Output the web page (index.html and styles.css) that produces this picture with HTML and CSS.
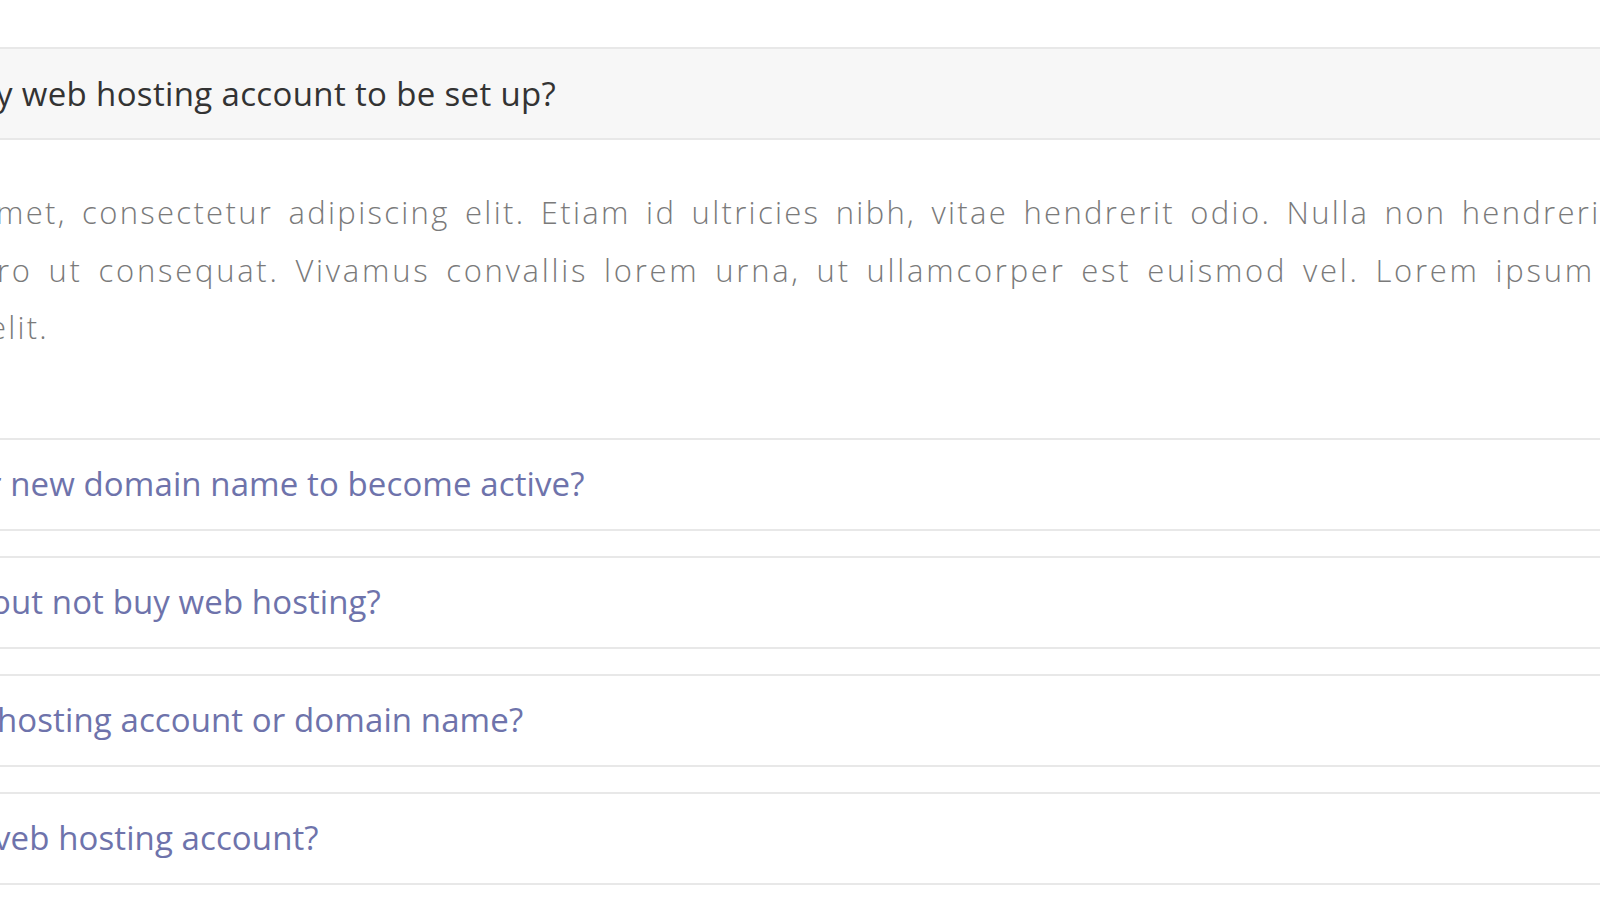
FILE: index.html
```html
<!DOCTYPE html>
<html lang="en">
<head>
<meta charset="utf-8">
<title>FAQ</title>
<link rel="stylesheet" href="styles.css">
</head>
<body>
<div class="faq">
  <div class="panel open">
    <div class="panel-heading">
      <h4 class="panel-title q1">y web hosting account to be set up?</h4>
    </div>
    <div class="panel-body">
      <p class="answer">
        <span class="line l1">met, consectetur adipiscing elit. Etiam id ultricies nibh, vitae hendrerit odio. Nulla non hendrerit</span>
        <span class="line l2">ro ut consequat. Vivamus convallis lorem urna, ut ullamcorper est euismod vel. Lorem ipsum dolor</span>
        <span class="line l3">elit.</span>
      </p>
    </div>
  </div>
  <div class="panel">
    <div class="panel-heading">
      <h4 class="panel-title link q2">r new domain name to become active?</h4>
    </div>
  </div>
  <div class="panel">
    <div class="panel-heading">
      <h4 class="panel-title link q3">out not buy web hosting?</h4>
    </div>
  </div>
  <div class="panel">
    <div class="panel-heading">
      <h4 class="panel-title link q4">hosting account or domain name?</h4>
    </div>
  </div>
  <div class="panel">
    <div class="panel-heading">
      <h4 class="panel-title link q5">veb hosting account?</h4>
    </div>
  </div>
</div>
</body>
</html>
```
FILE: styles.css
```css
html, body {
  margin: 0;
  padding: 0;
  background: #ffffff;
  overflow: hidden;
}

body {
  width: 1600px;
  height: 900px;
  font-family: "Open Sans", "Lato", "Liberation Sans", sans-serif;
}

.faq {
  padding-top: 47px;
  margin: 0 -20px;
}

.panel {
  border-top: 2px solid #e8e8e8;
  border-bottom: 2px solid #e8e8e8;
  margin-top: 25px;
  background: #ffffff;
}

.panel.open {
  margin-top: 0;
}

.panel.open + .panel {
  margin-top: 0;
  border-top: none;
}

.panel-heading {
  height: 89px;
  display: flex;
  align-items: center;
  padding-left: 20px;
  overflow: hidden;
}

.panel.open .panel-heading {
  background: #f7f7f7;
  border-bottom: 2px solid #e8e8e8;
}

.panel-title {
  margin: 0;
  font-size: 33px;
  font-weight: 400;
  line-height: 42px;
  white-space: nowrap;
  color: #333333;
  letter-spacing: 0.1px;
  padding-bottom: 2px;
}

.panel-title.link {
  color: #6e73ab;
}

.q1 { margin-left: -4px; letter-spacing: 0.35px; padding-bottom: 0; }
.q2 { margin-left: -12px; }
.q3 { margin-left: -9px; }
.q4 { margin-left: -3px; }
.q5 { margin-left: -6px; }

.panel-body {
  height: 298px;
  box-sizing: border-box;
  padding: 44px 0 0 20px;
  overflow: hidden;
}

.answer {
  margin: 0;
  font-size: 31px;
  font-weight: 300;
  line-height: 57.5px;
  color: #7a7a7a;
  letter-spacing: 2.2px;
  word-spacing: 5px;
}

.line {
  display: block;
  white-space: nowrap;
}

.l1 { margin-left: -4px; letter-spacing: 2.32px; }
.l2 { margin-left: -3px; letter-spacing: 2.75px; }
.l3 { margin-left: -11px; }
```
